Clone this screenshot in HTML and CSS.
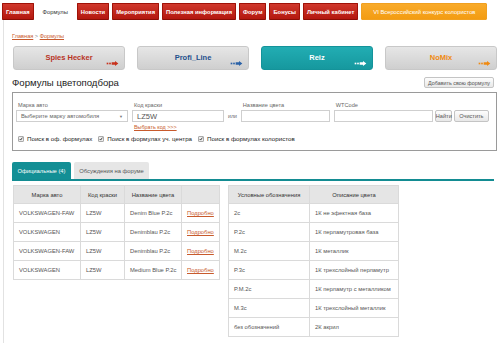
FILE: index.html
```html
<!DOCTYPE html>
<html lang="ru">
<head>
<meta charset="utf-8">
<title>Формулы цветоподбора</title>
<link rel="stylesheet" href="styles.css">
</head>
<body>
<nav class="topnav">
  <a class="tab">Главная</a>
  <a class="tab active">Формулы</a>
  <a class="tab">Новости</a>
  <a class="tab">Мероприятия</a>
  <a class="tab">Полезная информация</a>
  <a class="tab">Форум</a>
  <a class="tab">Бонусы</a>
  <a class="tab">Личный кабинет</a>
  <a class="tab promo">VI Всероссийский конкурс колористов</a>
</nav>
<div class="page">
  <div class="crumbs"><a>Главная</a> &gt; <a>Формулы</a></div>

  <div class="brands">
    <a class="brand spies">Spies Hecker
      <svg class="arrow" viewBox="0 0 14 6"><rect x="0" y="2" width="2" height="2"/><rect x="3" y="2" width="2" height="2"/><path d="M6 1.5h4V0l4 3-4 3V4.5H6z"/></svg></a>
    <a class="brand profi">Profi_Line
      <svg class="arrow" viewBox="0 0 14 6"><rect x="0" y="2" width="2" height="2"/><rect x="3" y="2" width="2" height="2"/><path d="M6 1.5h4V0l4 3-4 3V4.5H6z"/></svg></a>
    <a class="brand reiz">Reiz
      <svg class="arrow" viewBox="0 0 14 6"><rect x="0" y="2" width="2" height="2"/><rect x="3" y="2" width="2" height="2"/><path d="M6 1.5h4V0l4 3-4 3V4.5H6z"/></svg></a>
    <a class="brand nomix">NoMix
      <svg class="arrow" viewBox="0 0 14 6"><rect x="0" y="2" width="2" height="2"/><rect x="3" y="2" width="2" height="2"/><path d="M6 1.5h4V0l4 3-4 3V4.5H6z"/></svg></a>
  </div>

  <div class="titlerow">
    <h1>Формулы цветоподбора</h1>
    <button class="btn add">Добавить свою формулу</button>
  </div>

  <div class="filter">
    <div class="fields">
      <div class="field f-mark">
        <label>Марка авто</label>
        <div class="select">Выберите марку автомобиля <span class="caret">▼</span></div>
      </div>
      <div class="field f-code">
        <label>Код краски</label>
        <div class="input">LZ5W</div>
        <a class="pick">Выбрать код &gt;&gt;&gt;</a>
      </div>
      <div class="or">или</div>
      <div class="field f-name">
        <label>Название цвета</label>
        <div class="input"></div>
      </div>
      <div class="field f-wt">
        <label>WTCode</label>
        <div class="input"></div>
      </div>
      <div class="actions">
        <button class="btn find">Найти</button>
        <button class="btn clear">Очистить</button>
      </div>
    </div>
    <div class="checks">
      <span class="check"><span class="cb"><svg viewBox="0 0 6 6"><path d="M1 3l1.5 1.6L5 1"/></svg></span>Поиск в оф. формулах</span>
      <span class="check"><span class="cb"><svg viewBox="0 0 6 6"><path d="M1 3l1.5 1.6L5 1"/></svg></span>Поиск в формулах уч. центра</span>
      <span class="check"><span class="cb"><svg viewBox="0 0 6 6"><path d="M1 3l1.5 1.6L5 1"/></svg></span>Поиск в формулах колористов</span>
    </div>
  </div>

  <div class="tabs">
    <a class="ttab on">Официальные (4)</a>
    <a class="ttab">Обсуждения на форуме</a>
  </div>

  <div class="tables">
    <table class="grid results">
      <thead>
        <tr><th class="c1">Марка авто</th><th class="c2">Код краски</th><th class="c3">Название цвета</th><th class="c4"></th></tr>
      </thead>
      <tbody>
        <tr><td>VOLKSWAGEN-FAW</td><td>LZ5W</td><td>Denim Blue P.2c</td><td><a class="more">Подробно</a></td></tr>
        <tr><td>VOLKSWAGEN</td><td>LZ5W</td><td>Denimblau P.2c</td><td><a class="more">Подробно</a></td></tr>
        <tr><td>VOLKSWAGEN-FAW</td><td>LZ5W</td><td>Denimblau P.2c</td><td><a class="more">Подробно</a></td></tr>
        <tr><td>VOLKSWAGEN</td><td>LZ5W</td><td>Medium Blue P.2c</td><td><a class="more">Подробно</a></td></tr>
      </tbody>
    </table>
    <table class="grid legend">
      <thead>
        <tr><th class="l1">Условные обозначения</th><th class="l2">Описание цвета</th></tr>
      </thead>
      <tbody>
        <tr><td>2c</td><td>1К не эфектная база</td></tr>
        <tr><td>P.2c</td><td>1К перламутровая база</td></tr>
        <tr><td>M.2c</td><td>1К металлик</td></tr>
        <tr><td>P.3c</td><td>1К трехслойный перламутр</td></tr>
        <tr><td>P.M.2c</td><td>1К перламутр с металликом</td></tr>
        <tr><td>M.3c</td><td>1К трехслойный металлик</td></tr>
        <tr><td>без обозначений</td><td>2К акрил</td></tr>
      </tbody>
    </table>
  </div>
</div>
</body>
</html>
```

FILE: styles.css
```css
* { box-sizing: border-box; }
html, body { margin: 0; padding: 0; background: #fff; }
body {
  font-family: "Liberation Sans", Arial, sans-serif;
  color: #444;
  width: 500px;
  height: 343px;
  overflow: hidden;
}
a { text-decoration: none; color: inherit; }

/* top navigation */
.topnav {
  display: flex;
  gap: 3px;
  padding: 3px 0 0 2px;
  height: 20px;
}
.tab {
  display: flex;
  align-items: center;
  height: 17px;
  padding: 0 3px;
  font-size: 5.8px;
  font-weight: bold;
  color: #fff;
  background: linear-gradient(#d0382c, #b3180f);
  border: 1px solid #a01208;
  border-bottom-color: #8a0e06;
  border-radius: 1px;
  white-space: nowrap;
}
.tab.active {
  background: #fff;
  color: #333;
  border-color: #fff;
  font-weight: normal;
  padding: 0 5px;
}
.tab.promo {
  background: linear-gradient(#f9ab2a, #f39c12);
  border-color: #f0a020;
  color: #fff;
  padding: 0 11px;
  font-weight: normal;
}

/* page */
.page {
  margin-left: 3px;
  border-left: 1px solid #e2e2e2;
  padding: 13px 3px 0 8px;
  height: 323px;
}
.crumbs {
  font-size: 5.6px;
  color: #888;
  height: 13px;
}
.crumbs a { color: #c85a2c; text-decoration: underline; }

/* brand buttons */
.brands {
  display: flex;
  gap: 12px;
  margin-left: 1px;
}
.brand {
  position: relative;
  flex: 0 0 112px;
  height: 24px;
  border-radius: 3px;
  background: linear-gradient(#e6e6e6, #cfcfcf);
  border: 1px solid #c8c8c8;
  display: flex;
  align-items: center;
  justify-content: center;
  font-size: 7.5px;
  font-weight: bold;
  padding-bottom: 1px;
}
.brand .arrow {
  position: absolute;
  right: 5px;
  bottom: 3px;
  width: 13px;
  height: 5px;
}
.spies { color: #b8321f; }
.spies .arrow { fill: #c8321c; }
.profi { color: #23508c; }
.profi .arrow { fill: #2a62a8; }
.reiz { background: linear-gradient(#22adb3, #16989e); border-color: #14939a; color: #fff; }
.reiz .arrow { fill: #fff; }
.nomix { color: #f08a12; }
.nomix .arrow { fill: #f08a12; }

/* title */
.titlerow {
  display: flex;
  align-items: center;
  justify-content: space-between;
  margin-top: 7px;
  height: 11px;
  padding-right: 3px;
}
h1 {
  margin: 0;
  font-size: 9.6px;
  font-weight: normal;
  color: #222;
}
.btn {
  font-family: "Liberation Sans", Arial, sans-serif;
  font-size: 5.4px;
  color: #555;
  background: linear-gradient(#fdfdfd, #e8e8e8);
  border: 1px solid #c4c4c4;
  border-radius: 2px;
  padding: 0 3px;
  height: 11px;
  cursor: pointer;
}
.btn.add { height: 11px; padding: 0 3px; }

/* filter */
.filter {
  margin-top: 4px;
  border: 1px solid #9a9a9a;
  height: 59px;
  padding: 9px 0 0 3px;
}
.fields {
  display: flex;
  align-items: flex-start;
}
.field { display: flex; flex-direction: column; }
.field label {
  font-size: 5.6px;
  color: #666;
  height: 8px;
  margin-left: 2px;
}
.select, .input {
  height: 12px;
  border: 1px solid #cfcfcf;
  background: #fff;
  font-size: 5.8px;
  color: #666;
  display: flex;
  align-items: center;
  padding: 0 4px;
}
.f-mark .select { width: 112px; justify-content: space-between; }
.caret { font-size: 4px; color: #777; }
.f-code { margin-left: 4px; }
.f-code .input { width: 92px; font-size: 7.5px; color: #555; }
.pick {
  font-size: 5.4px;
  color: #c85a2c;
  text-decoration: underline;
  margin: 2px 0 0 2px;
}
.or {
  font-size: 5.2px;
  color: #666;
  margin: 11px 4px 0 4px;
}
.f-name .input { width: 89px; }
.f-wt { margin-left: 4px; }
.f-wt .input { width: 99px; }
.actions {
  display: flex;
  gap: 2px;
  margin: 8px 0 0 2px;
}
.btn.find, .btn.clear { height: 12px; font-size: 5.6px; }
.btn.find { width: 17px; padding: 0; }
.btn.clear { width: 35px; padding: 0; }
.checks {
  display: flex;
  gap: 6px;
  margin-top: 5px;
  margin-left: 2px;
}
.check {
  display: flex;
  align-items: center;
  gap: 3px;
  font-size: 6.2px;
  color: #222;
}
.cb {
  width: 6px;
  height: 6px;
  border: 1px solid #aaa;
  border-radius: 1px;
  background: #eee;
  display: flex;
}
.cb svg { width: 100%; height: 100%; fill: none; stroke: #333; stroke-width: 1.3; }

/* tabs */
.tabs {
  display: flex;
  gap: 3px;
  margin-top: 11px;
  border-bottom: 2px solid #138c92;
  height: 19px;
  margin-right: 3px;
}
.ttab {
  display: flex;
  align-items: center;
  height: 17px;
  padding: 0 5px;
  font-size: 5.8px;
  background: #e6e6e6;
  color: #555;
  border-radius: 2px 2px 0 0;
}
.ttab.on { background: #138f95; color: #fff; width: 59px; justify-content: center; }
.ttab:not(.on) { width: 75px; justify-content: center; }

/* tables */
.tables {
  display: flex;
  gap: 8px;
  align-items: flex-start;
  margin-top: 4px;
  margin-left: 1px;
}
.grid {
  border-collapse: collapse;
  font-size: 5.8px;
  color: #555;
}
.grid th {
  background: #e5e5e5;
  font-weight: normal;
  color: #333;
  height: 18px;
  border: 1px solid #dadada;
  text-align: center;
  padding: 0;
}
.grid td {
  height: 19px;
  border: 1px solid #dadada;
  padding: 0 0 0 5px;
  white-space: nowrap;
}
.c1 { width: 67px; }
.c2 { width: 44px; }
.c3 { width: 57px; }
.c4 { width: 38px; }
.l1 { width: 81px; }
.l2 { width: 89px; }
.more { color: #c85a2c; text-decoration: underline; }
```
